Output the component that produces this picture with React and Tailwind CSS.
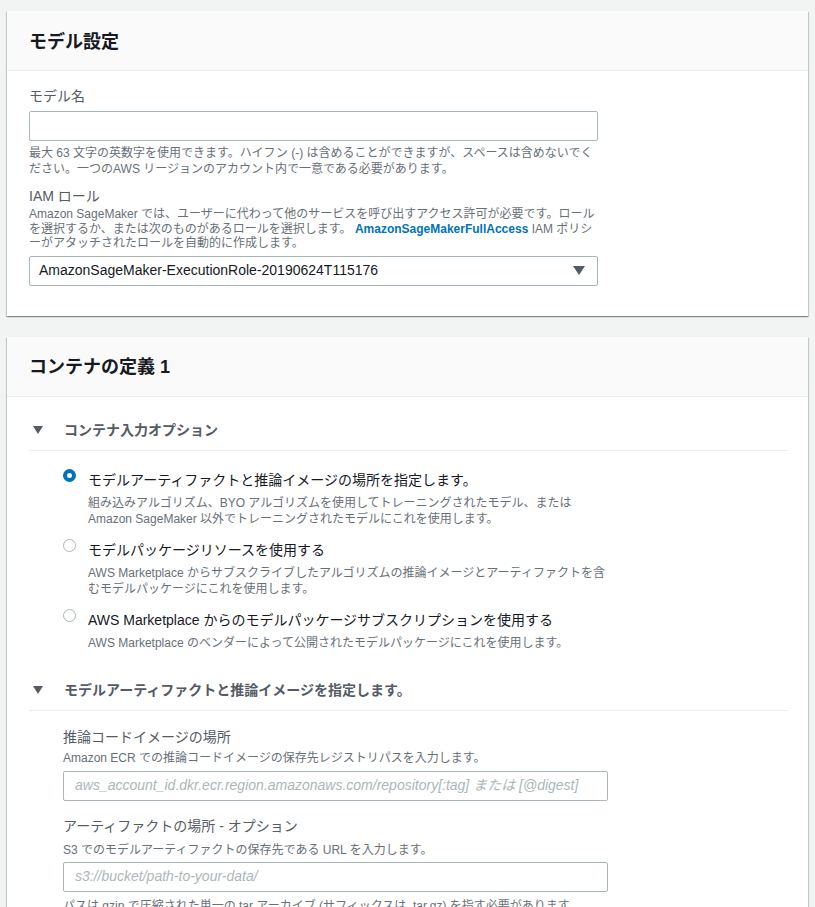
import React from "react";

function Caret({ className }) {
  return (
    <svg className={className} width="10" height="8" viewBox="0 0 10 8">
      <path d="M0 0 L10 0 L5 8 Z" fill="#545b64" />
    </svg>
  );
}

function Radio({ checked }) {
  return checked ? (
    <span className="mt-[0.5px] box-border block h-[13px] w-[13px] shrink-0 rounded-full border-[4px] border-[#0073bb] bg-white" />
  ) : (
    <span className="mt-[0.5px] box-border block h-[13px] w-[13px] shrink-0 rounded-full border border-[#aab7b8] bg-white" />
  );
}

function CardHeader({ title, pt }) {
  return (
    <div className={`h-[60px] border-b border-[#eaeded] bg-[#fafafa] px-[22px] ${pt}`}>
      <h2 className="text-[18px] font-bold leading-[22px] text-[#16191f]">{title}</h2>
    </div>
  );
}

function SectionHeader({ title }) {
  return (
    <div className="flex items-center border-b border-[#eaeded] pb-[9px]">
      <Caret className="ml-[4px]" />
      <span className="ml-[21px] text-[14px] font-bold leading-[22px] text-[#545b64]">{title}</span>
    </div>
  );
}

function Option({ checked, label, desc, className }) {
  return (
    <div className={`flex items-start ${className || ""}`}>
      <Radio checked={checked} />
      <div className="ml-[12px]">
        <div className="text-[14px] leading-[22px] text-[#16191f]">{label}</div>
        <div className="mt-[4px] text-[12px] leading-[16px] text-[#687078]">{desc}</div>
      </div>
    </div>
  );
}

const card =
  "w-[801px] bg-white shadow-[0_1px_1px_0_rgba(0,28,36,0.3),1px_1px_1px_0_rgba(0,28,36,0.15),-1px_1px_1px_0_rgba(0,28,36,0.15)]";

export default function App() {
  return (
    <div className="min-h-screen overflow-hidden bg-[#f2f3f3] pl-[7px] pt-[11px] font-['Liberation_Sans','Noto_Sans_CJK_JP',sans-serif]">
      <div className={card}>
        <CardHeader title="モデル設定" pt="pt-[20px]" />
        <div className="px-[22px] pb-[30px] pt-[14px]">
          <div className="text-[14px] leading-[22px] text-[#545b64]">モデル名</div>
          <div className="mt-[4px] h-[30px] w-[569px] rounded-[2px] border border-[#aab7b8] bg-white" />
          <div className="mt-[4px] whitespace-nowrap text-[12px] leading-[16px] text-[#687078]">
            最大 63 文字の英数字を使用できます。ハイフン (-) は含めることができますが、スペースは含めないでく
            <br />
            ださい。一つのAWS リージョンのアカウント内で一意である必要があります。
          </div>
          <div className="mt-[8px] text-[14px] leading-[22px] text-[#545b64]">IAM ロール</div>
          <div className="whitespace-nowrap text-[12px] leading-[14.5px] text-[#687078]">
            Amazon SageMaker では、ユーザーに代わって他のサービスを呼び出すアクセス許可が必要です。ロール
            <br />
            を選択するか、または次のものがあるロールを選択します。{" "}
            <span className="font-bold text-[#0073bb]">AmazonSageMakerFullAccess</span> IAM ポリシ
            <br />
            ーがアタッチされたロールを自動的に作成します。
          </div>
          <div className="mt-[5px] flex h-[30px] w-[569px] items-center justify-between rounded-[2px] border border-[#aab7b8] bg-white pl-[9px] pr-[12px]">
            <span className="text-[14px] text-[#16191f]">AmazonSageMaker-ExecutionRole-20190624T115176</span>
            <svg width="12" height="9" viewBox="0 0 12 9">
              <path d="M0 0 L12 0 L6 9 Z" fill="#545b64" />
            </svg>
          </div>
        </div>
      </div>

      <div className={`${card} mt-[21px] pb-[40px]`}>
        <CardHeader title="コンテナの定義 1" pt="pt-[19px]" />
        <div className="pl-[22px] pr-[20px] pt-[22px]">
          <SectionHeader title="コンテナ入力オプション" />
          <div className="pl-[34px] pt-[18px]">
            <Option
              checked
              label="モデルアーティファクトと推論イメージの場所を指定します。"
              desc={
                <>
                  組み込みアルゴリズム、BYO アルゴリズムを使用してトレーニングされたモデル、または
                  <br />
                  Amazon SageMaker 以外でトレーニングされたモデルにこれを使用します。
                </>
              }
            />
            <Option
              className="mt-[12px]"
              label="モデルパッケージリソースを使用する"
              desc={
                <>
                  AWS Marketplace からサブスクライブしたアルゴリズムの推論イメージとアーティファクトを含
                  <br />
                  むモデルパッケージにこれを使用します。
                </>
              }
            />
            <Option
              className="mt-[12px]"
              label="AWS Marketplace からのモデルパッケージサブスクリプションを使用する"
              desc="AWS Marketplace のベンダーによって公開されたモデルパッケージにこれを使用します。"
            />
          </div>

          <div className="mt-[28px]">
            <SectionHeader title="モデルアーティファクトと推論イメージを指定します。" />
          </div>
          <div className="pl-[34px] pt-[15px]">
            <div className="text-[14px] leading-[22px] text-[#545b64]">推論コードイメージの場所</div>
            <div className="mt-[2px] text-[12px] leading-[16px] text-[#687078]">
              Amazon ECR での推論コードイメージの保存先レジストリパスを入力します。
            </div>
            <div className="mt-[5px] flex h-[30px] w-[545px] items-center rounded-[2px] border border-[#aab7b8] bg-white pl-[11px]">
              <span className="whitespace-nowrap text-[14px] italic text-[#aab7b8]">
                aws_account_id.dkr.ecr.region.amazonaws.com/repository[:tag] または [@digest]
              </span>
            </div>
            <div className="mt-[14px] text-[14px] leading-[22px] text-[#545b64]">アーティファクトの場所 - オプション</div>
            <div className="mt-[5px] text-[12px] leading-[16px] text-[#687078]">
              S3 でのモデルアーティファクトの保存先である URL を入力します。
            </div>
            <div className="mt-[4px] flex h-[30px] w-[545px] items-center rounded-[2px] border border-[#aab7b8] bg-white pl-[11px]">
              <span className="whitespace-nowrap text-[14px] italic text-[#aab7b8]">s3://bucket/path-to-your-data/</span>
            </div>
            <div className="mt-[6px] text-[12px] leading-[16px] text-[#687078]">
              パスは gzip で圧縮された単一の tar アーカイブ (サフィックスは .tar.gz) を指す必要があります。
            </div>
          </div>
        </div>
      </div>
    </div>
  );
}
